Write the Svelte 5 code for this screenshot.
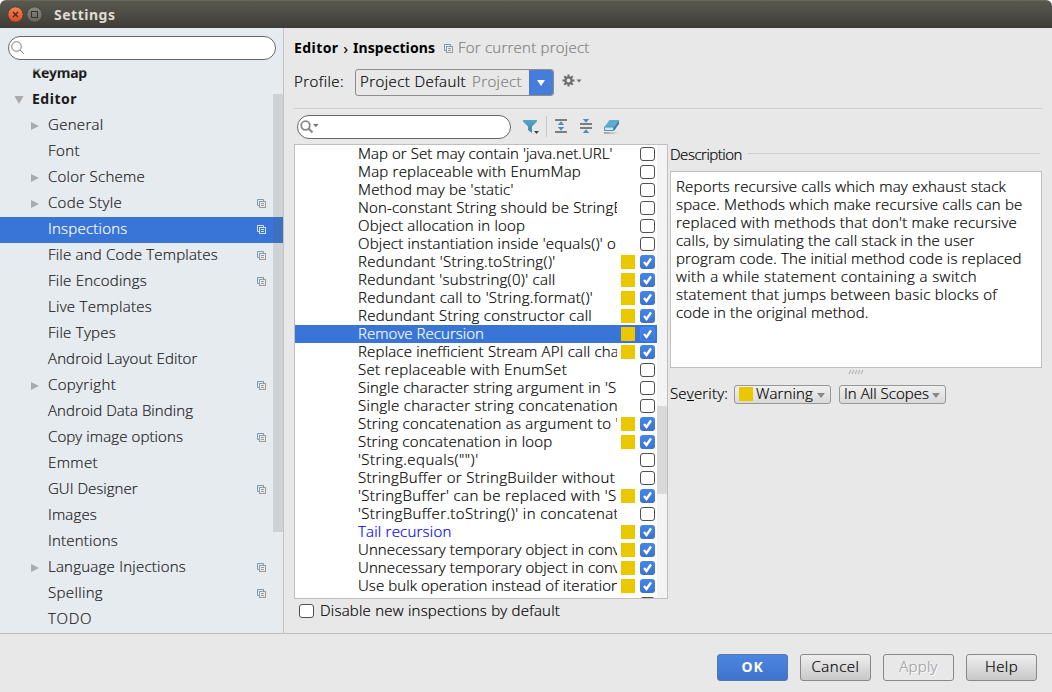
<script>
  // Adjusts tracking so a label spans its nominal width.
  function fit(node, w) {
    if (!w) return;
    const run = () => {
      node.style.letterSpacing = '0px';
      const n = [...node.textContent].length;
      const cur = node.getBoundingClientRect().width;
      node.style.letterSpacing = (w - cur) / n + 'px';
    };
    run();
    document.fonts?.ready.then(run);
  }

  const tree = [
    ['Keymap', 55, 'root'],
    ['Editor', 45, 'root open'],
    ['General', 55.5, 'arrow'],
    ['Font', 32, ''],
    ['Color Scheme', 97, 'arrow'],
    ['Code Style', 74, 'arrow', true],
    ['Inspections', 79.5, 'selected', true],
    ['File and Code Templates', 170, '', true],
    ['File Encodings', 99, '', true],
    ['Live Templates', 104, ''],
    ['File Types', 68, ''],
    ['Android Layout Editor', 149.5, ''],
    ['Copyright', 68, 'arrow', true],
    ['Android Data Binding', 145, ''],
    ['Copy image options', 135, '', true],
    ['Emmet', 50, ''],
    ['GUI Designer', 89.5, '', true],
    ['Images', 49, ''],
    ['Intentions', 70, ''],
    ['Language Injections', 138, 'arrow', true],
    ['Spelling', 55, '', true],
    ['TODO', 44, '']
  ];

  const rows = [
    ["Map or Set may contain 'java.net.URL'", 254.5, 0],
    ['Map replaceable with EnumMap', 223, 0],
    ["Method may be 'static'", 155.5, 0],
    ['Non-constant String should be StringB', 265, 0],
    ['Object allocation in loop', 167, 0],
    ["Object instantiation inside 'equals()' o", 258, 0],
    ["Redundant 'String.toString()'", 197.5, 1],
    ["Redundant 'substring(0)' call", 197.5, 1],
    ["Redundant call to 'String.format()'", 235, 1],
    ['Redundant String constructor call', 234, 1],
    ['Remove Recursion', 126, 1, 'sel'],
    ['Replace inefficient Stream API call cha', 261, 1],
    ['Set replaceable with EnumSet', 209, 0],
    ["Single character string argument in 'S", 258.5, 0],
    ['Single character string concatenation', 260, 0],
    ["String concatenation as argument to 'S", 269, 1],
    ['String concatenation in loop', 194.5, 1],
    ["'String.equals(\"\")'", 120.5, 0],
    ['StringBuffer or StringBuilder without', 257, 0],
    ["'StringBuffer' can be replaced with 'S", 258.5, 1],
    ["'StringBuffer.toString()' in concatenat", 261, 0],
    ['Tail recursion', 93.5, 1, 'link'],
    ['Unnecessary temporary object in conv', 262, 1],
    ['Unnecessary temporary object in conv', 262, 1],
    ['Use bulk operation instead of iteration', 262, 1],
    ['Variable replaceable with file', 210, 0]
  ];

  const description = [
    ['Reports recursive calls which may exhaust stack', 330],
    ['space. Methods which make recursive calls can be', 346.5],
    ["replaced with methods that don't make recursive", 341],
    ['calls, by simulating the call stack in the user', 298.5],
    ['program code. The initial method code is replaced', 345.5],
    ['with a while statement containing a switch', 301],
    ['statement that jumps between basic blocks of', 321],
    ['code in the original method.', 192.5]
  ];
</script>

{#snippet copyIcon()}
  <svg class="copy" width="10" height="10" viewBox="0 0 10 10" fill="none">
    <path class="back" d="M2.500 6.500h-2v-6h6v2" />
    <rect class="front" x="2.500" y="2.500" width="6" height="6" />
    <path class="front" d="M4 4.500h3M4 6.500h3" />
  </svg>
{/snippet}

{#snippet check(on)}
  <span class="box" class:on>
    {#if on}
      <svg width="15" height="14" viewBox="0 0 15 14" fill="none"><path d="M4 7 6.500 10 11 3.500" stroke="#fff" stroke-width="2.300" /></svg>
    {/if}
  </span>
{/snippet}

<div class="window">
  <header class="titlebar">
    <svg width="46" height="28" viewBox="0 0 46 28" fill="none">
      <defs>
        <linearGradient id="close" x2="0" y2="1"><stop stop-color="#f4845a" /><stop offset="1" stop-color="#df4a16" /></linearGradient>
        <linearGradient id="max" x2="0" y2="1"><stop stop-color="#8b8a82" /><stop offset="1" stop-color="#64635c" /></linearGradient>
      </defs>
      <circle cx="15.500" cy="14.500" r="7.700" fill="url(#close)" stroke="#45423a" />
      <path d="m13 12 5 5m0-5-5 5" stroke="#43291d" stroke-width="1.200" />
      <circle cx="34.500" cy="14.500" r="7.700" fill="url(#max)" stroke="#45423a" />
      <rect x="31.500" y="11.500" width="6" height="6" stroke="#34332e" />
    </svg>
    <b use:fit={61.5}>Settings</b>
  </header>

  <div class="body">
    <nav class="side">
      <div class="search">
        <svg width="14" height="14" viewBox="0 0 14 14" fill="none" stroke="#777"><circle cx="5.500" cy="5.500" r="4.800" /><path d="m9 9 3.800 3.800" /></svg>
      </div>
      <div class="tree">
        {#each tree as [label, w, kind, copy]}
          <div class="node {kind}">
            <svg class="twisty" width="10" height="10" viewBox="0 0 10 10">
              {#if kind === 'arrow'}<path d="M1 1v8l8-4z" />{/if}
              {#if kind === 'root open'}<path d="M0.500 1h9L5 9z" />{/if}
            </svg>
            <span class="label" use:fit={w}>{label}</span>
            {#if copy}{@render copyIcon()}{/if}
          </div>
        {/each}
        <i class="fade"></i>
        <i class="thumb"></i>
      </div>
    </nav>

    <main>
      <div class="crumbs">
        <b use:fit={44.5}>Editor</b><span class="sep">›</span><b use:fit={82}>Inspections</b>
        {@render copyIcon()}
        <span class="muted" use:fit={131.5}>For current project</span>
      </div>

      <div class="profile">
        <span use:fit={50}>Profile:</span>
        <div class="combo">
          <span use:fit={106}>Project Default</span>
          <span class="muted" use:fit={50}>Project</span>
          <span class="drop"><svg width="8" height="6"><path d="M0 0h8L4 6z" fill="#fff" /></svg></span>
        </div>
        <svg class="gear" width="20" height="14" viewBox="0 0 20 14" fill="none">
          <path d="M6.500 0.500v12M0.500 6.500h12M2.300 2.300l8.400 8.400M10.700 2.300l-8.400 8.400" stroke="#6e6e6e" stroke-width="2" />
          <circle cx="6.500" cy="6.500" r="3.100" stroke="#6e6e6e" stroke-width="2.400" />
          <circle cx="6.500" cy="6.500" r="1.900" fill="#e8e8e8" />
          <path d="M14.500 5.500h5l-2.500 3z" fill="#6e6e6e" />
        </svg>
      </div>

      <div class="tools">
        <div class="search small">
          <svg width="22" height="14" viewBox="0 0 22 14" fill="none"><circle cx="5.500" cy="5.500" r="4.300" stroke="#888" stroke-width="1.800" /><path d="m8.500 8.500 4 4" stroke="#888" stroke-width="2.200" /><path d="M13 4h5.600l-2.800 3.200z" fill="#777" /></svg>
        </div>
        <svg class="tool-icons" width="100" height="22" viewBox="0 0 100 22">
          <defs>
            <linearGradient id="blue" x2="0" y2="1"><stop stop-color="#5aa5c6" /><stop offset="1" stop-color="#3c86b0" /></linearGradient>
            <linearGradient id="shade"><stop stop-color="#555" /><stop offset="1" stop-color="#555" stop-opacity="0" /></linearGradient>
          </defs>
          <path d="M0 5h14v1.500L9 11.500v6.500l-4-3v-3.500L0 6.500z" fill="url(#blue)" />
          <path d="M11 16h5l-2.500 3z" fill="#444" />
          <path d="M23.500 1v21" stroke="#c8c8c8" />
          <path d="M32 5h12M32 17h12M57 9h12M57 13h12" stroke="#7d7d7d" stroke-width="1.800" />
          <path d="m38 6.200 3.200 3.800h-6.400zM38 15.800l3.200-3.800h-6.400zM59.800 4h6.400L63 7.800zM59.800 18h6.400L63 14.200z" fill="#4a90bd" />
          <path d="M86.500 5H96l-5 7h-9.500z" fill="#62abd0" />
          <path d="M81.500 12h9v3.500h-9z" fill="#d3e6f0" stroke="#4f94b8" />
          <path d="M96 5v3.800L91 16v-4z" fill="#3a7da6" />
          <path d="M81 17.500h15v1H81z" fill="url(#shade)" />
        </svg>
      </div>

      <div class="content">
        <section class="left">
          <div class="list">
            {#each rows as [label, w, on, kind]}
              <div class="row {kind ?? ''}">
                <span class="name"><span class="label" use:fit={w}>{label}</span></span>
                <i class="sev" class:on={!!on}></i>
                {@render check(!!on)}
              </div>
            {/each}
            <i class="track"><i></i></i>
          </div>
          <div class="disable">{@render check(false)}<span class="up" use:fit={240}>Disable new inspections by default</span></div>
        </section>

        <section class="right">
          <div class="legend"><span use:fit={72}>Description</span><hr /></div>
          <div class="desc">
            {#each description as [line, w]}<div><span use:fit={w}>{line}</span></div>{/each}
          </div>
          <div class="grip"><svg width="16" height="4" viewBox="0 0 16 4" stroke="#aaa"><path d="m1 4 2-4m1 4 2-4m1 4 2-4m1 4 2-4m1 4 2-4" /></svg></div>
          <div class="severity">
            <span class="up" use:fit={58}>Se<u>v</u>erity:</span>
            <span class="select first"><i class="sev on"></i><span class="up" use:fit={57}>Warning</span><svg width="8" height="5"><path d="M0 0h8L4 5z" fill="#888" /></svg></span>
            <span class="select second"><span class="up" use:fit={85}>In All Scopes</span><svg width="8" height="5"><path d="M0 0h8L4 5z" fill="#888" /></svg></span>
          </div>
        </section>
      </div>
    </main>
  </div>

  <footer>
    <button class="primary"><span use:fit={22}>OK</span></button>
    <button><span use:fit={48}>Cancel</span></button>
    <button class="disabled"><span use:fit={38.5}>Apply</span></button>
    <button><span use:fit={33}>Help</span></button>
  </footer>
</div>

<style>
  :global(body) { margin: 0; background: #fff; }
  * { box-sizing: border-box; }
  .window {
    width: 1052px; height: 692px; display: flex; flex-direction: column; overflow: hidden;
    background: #e8e8e8; color: #000; font: 300 15px/18px "Open Sans", "Noto Sans", sans-serif;
    white-space: nowrap; border-radius: 6px 6px 0 0; -webkit-text-stroke: 0.2px;
  }
  span, b { flex: none; }
  svg { flex: none; display: block; }
  b { font-family: "Noto Sans", sans-serif; font-weight: 700; font-size: 14px; -webkit-text-stroke: 0; }
  .muted { color: #808080; }
  .up { padding-bottom: 2px; }
  .titlebar { height: 28px; flex: none; display: flex; align-items: center; gap: 8px; color: #dfdbd2; background: linear-gradient(#5a5950, #3d3c37); border-top: 1px solid #68665d; }
  .titlebar svg { margin-top: -1px; }
  .titlebar b { padding-top: 1px; }
  .body { flex: none; height: 606px; display: flex; border-bottom: 1px solid #bfbfbf; }

  .side { width: 284px; flex: none; display: flex; flex-direction: column; background: #e6ebf0; border-right: 1px solid #c3c3c3; color: #1a1a1a; }
  .search { width: 268px; height: 24px; flex: none; margin: 8px 0 0 8px; display: flex; align-items: center; padding-left: 2px; background: #fff; border: 1px solid #666; border-radius: 12px; }
  .tree { margin-top: 8px; height: 565px; position: relative; overflow: hidden; }
  .node { height: 26px; display: flex; align-items: center; padding: 0 16px 0 30px; }
  .node:first-child { margin-top: -7px; }
  .node .label { margin-left: 8px; padding-bottom: 5px; }
  .node.root { padding-left: 14px; }
  .node.root .label { font: 700 14px/18px "Noto Sans", sans-serif; padding-bottom: 2px; -webkit-text-stroke: 0; }
  .twisty { fill: #a9abad; }
  .node .copy { margin-left: auto; }
  .selected { background: #3875d7; color: #fff; }
  .fade { position: absolute; left: 0; top: 0; width: 273px; height: 4px; background: linear-gradient(#e6ebf0, rgba(230, 235, 240, 0)); }
  .thumb { position: absolute; right: 0; top: 26px; width: 10px; height: 438px; background: rgba(90, 90, 90, 0.17); }
  .back { stroke: #6a9fc0; }
  .front { stroke: #9a9a9a; }
  .selected .back, .selected .front { stroke: #d5e3f7; }

  main { flex: 1; min-width: 0; padding: 0 10px; display: flex; flex-direction: column; }
  .crumbs { height: 40px; display: flex; align-items: center; }
  .crumbs .sep { width: 14.5px; text-align: center; font-weight: 400; }
  .crumbs .copy { margin: 1px 4px 0 9px; }
  .crumbs .muted { padding-bottom: 2px; }
  .profile { height: 41px; display: flex; align-items: center; padding-bottom: 11px; border-bottom: 1px solid #cdcdcd; }
  .profile > span, .combo > span:not(.drop) { padding-bottom: 3px; }
  .combo { width: 199px; height: 27px; flex: none; margin: 0 8px 0 11px; display: flex; align-items: center; border: 1px solid #8d8d8d; border-radius: 3px; padding-left: 4px; gap: 6px; overflow: hidden; }
  .drop { width: 24px; height: 27px; margin-left: auto; background: #467dd8; display: flex; align-items: center; justify-content: center; }
  .gear { margin-bottom: 3px; }
  .tools { height: 35px; flex: none; display: flex; padding-top: 6px; }
  .small { width: 214px; margin: 0 0 0 3px; }
  .tool-icons { margin-left: 12px; }
  .content { flex: 1; display: flex; gap: 2px; min-height: 0; }
  .left { width: 374px; flex: none; }
  .list { position: relative; height: 455px; overflow: hidden; background: #fff; border: 1px solid #bfbfbf; }
  .row { width: 362px; height: 18px; display: flex; align-items: center; padding-left: 63px; }
  .row.sel { background: #3875d7; color: #fff; }
  .row.link { color: #00f; }
  .name { width: 259px; height: 18px; line-height: 16px; overflow: hidden; }
  .label { display: inline-block; }
  .sev { width: 14px; height: 14px; flex: none; margin: 0 5px 0 4px; }
  .sev.on { background: #ebc700; }
  .box { width: 15px; height: 14px; border: 1px solid #505050; border-radius: 3px; background: #fff; }
  .box.on { border: 0; background: linear-gradient(#4586e8, #3c72cc); }
  .sel .box.on { box-shadow: inset 0 0 0 1px #3b8bf8; }
  .track { position: absolute; right: 0; top: 0; width: 10px; height: 453px; background: #f3f3f3; }
  .track i { display: block; margin-top: 261px; height: 88px; background: #d9d9d9; }
  .disable { display: flex; align-items: center; height: 24px; padding-left: 5px; gap: 6px; }

  .right { width: 372px; }
  .legend { height: 20px; display: flex; align-items: center; gap: 6px; }
  .legend hr { flex: 1; border: 0; border-top: 1px solid #cdcdcd; margin: 0 2px 2px 0; }
  .desc { height: 197px; margin-top: 7px; padding: 5px; background: #fff; border: 1px solid #bfbfbf; }
  .desc div { height: 18px; }
  .grip { height: 8px; display: flex; align-items: center; justify-content: center; }
  .severity { height: 20px; margin-top: 8px; display: flex; align-items: center; }
  .select { height: 19px; display: flex; align-items: center; border: 1px solid #979797; border-radius: 3px; background: linear-gradient(#efefef, #d9d9d9); }
  .first { width: 97px; margin-left: 6px; }
  .first .sev { margin: 0 3px 0 4px; }
  .second { width: 107px; margin-left: 8px; padding-left: 4px; }
  .select svg { margin: 3px 5px 0 auto; }
  footer { flex: 1; display: flex; align-items: center; justify-content: flex-end; gap: 12px; padding: 9px 15px 0 0; }
  button { width: 71px; height: 27px; padding: 0 0 3px; color: inherit; font: inherit; border: 1px solid #888; border-radius: 3px; background: linear-gradient(#efefef, #c8c8c8); }
  .primary { padding-bottom: 1px; color: #fff; font: 700 14px/18px "Noto Sans", sans-serif; border-color: #5577a8; background: linear-gradient(#4b86e2, #3f73cc); -webkit-text-stroke: 0; }
  .disabled { color: #a0a0a0; text-shadow: 1px 1px #fff; background: #e8e8e8; }
</style>
